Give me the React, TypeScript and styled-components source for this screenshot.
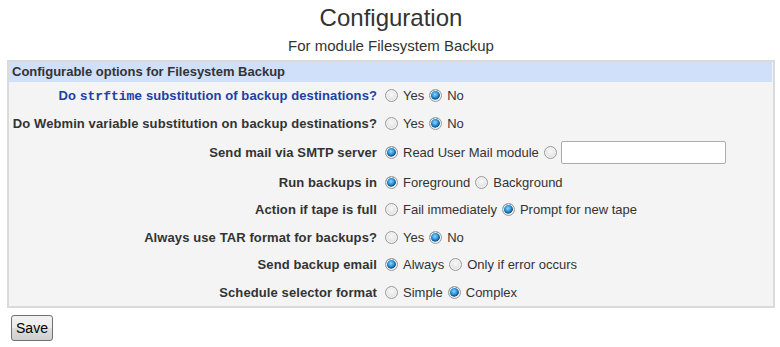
import React from 'react';
import styled, { createGlobalStyle } from 'styled-components';

const GlobalStyle = createGlobalStyle`
  body {
    margin: 0;
    background: #ffffff;
    font-family: "Liberation Sans", Arial, sans-serif;
    color: #333333;
  }
`;

const Page = styled.div`
  padding: 4px 5px 0 7px;
`;

const Title = styled.h1`
  margin: 0;
  text-align: center;
  font-size: 24px;
  line-height: 28px;
  font-weight: normal;
  color: #333;
`;

const Subtitle = styled.div`
  margin-top: 4.5px;
  text-align: center;
  font-size: 15px;
  line-height: 18px;
  color: #333;
`;

const Panel = styled.div`
  margin-top: 5.5px;
  border: 2px solid #dadada;
  padding: 0 1px 0 0;
  background: #f4f4f4;
`;

const PanelHead = styled.div`
  background: #d0dffa;
  height: 20px;
  line-height: 20px;
  padding-left: 3px;
  font-size: 13px;
  font-weight: bold;
  color: #333;
`;

const Grid = styled.div`
  display: grid;
  grid-template-columns: 368px 1fr;
  column-gap: 8px;
`;

const Label = styled.div<{ $link?: boolean }>`
  display: flex;
  align-items: center;
  justify-content: flex-end;
  padding: 4px 0 4.5px;
  min-height: 19px;
  font-size: 13px;
  font-weight: bold;
  letter-spacing: 0.1px;
  white-space: nowrap;
  color: ${p => (p.$link ? '#1c3fa8' : '#333')};

  tt {
    font-family: "Liberation Mono", "Courier New", monospace;
    font-size: 13px;
    letter-spacing: 0;
  }
`;

const Value = styled.div`
  display: flex;
  align-items: center;
  padding: 4px 0 4.5px;
  min-height: 19px;
  font-size: 13px;
  color: #333;
`;

const Radio = styled.input.attrs({ type: 'radio' })`
  appearance: none;
  -webkit-appearance: none;
  margin: 0 5px 0 0;
  width: 13px;
  height: 13px;
  flex: none;
  border-radius: 50%;
  border: 1px solid #9a9a9a;
  background: radial-gradient(circle at 50% 40%, #f8f8f8 0%, #e6e6e6 55%, #d2d2d2 100%);
  box-shadow: inset 0 0 0 1px #f4f4f4;

  &:checked {
    background:
      radial-gradient(circle at 45% 40%, #8fd6ff 0%, #2a8fd6 35%, #0b4f87 55%, transparent 62%),
      radial-gradient(circle at 50% 40%, #f8f8f8 0%, #e6e6e6 55%, #d2d2d2 100%);
  }
`;

const OptText = styled.span`
  margin-right: 5px;
  white-space: nowrap;
`;

const TextBox = styled.input.attrs({ type: 'text' })`
  width: 165px;
  height: 23px;
  box-sizing: border-box;
  margin: 0 0 0 -1px;
  border: 1px solid #acacac;
  border-radius: 2px;
  background: #fff;
  font: 13px "Liberation Sans", Arial, sans-serif;
`;

const SaveButton = styled.button`
  margin: 7px 0 0 4px;
  width: 42px;
  height: 26px;
  padding: 0;
  border: 1px solid #707070;
  border-radius: 3px;
  background: linear-gradient(#f2f2f2 0%, #ebebeb 50%, #dddddd 51%, #cfcfcf 100%);
  font: 14px "Liberation Sans", Arial, sans-serif;
  color: #000;
`;

type Opt = { text: string; checked?: boolean };

const Choice = ({ name, opts }: { name: string; opts: Opt[] }) => (
  <>
    {opts.map(o => (
      <React.Fragment key={o.text}>
        <Radio name={name} defaultChecked={o.checked} />
        {o.text && <OptText>{o.text}</OptText>}
      </React.Fragment>
    ))}
  </>
);

const rows: { label: React.ReactNode; name: string; opts: Opt[]; link?: boolean }[] = [
  {
    label: <>Do <tt>strftime</tt> substitution of backup destinations?</>,
    name: 'strftime',
    link: true,
    opts: [{ text: 'Yes' }, { text: 'No', checked: true }],
  },
  {
    label: 'Do Webmin variable substitution on backup destinations?',
    name: 'webmin',
    opts: [{ text: 'Yes' }, { text: 'No', checked: true }],
  },
];

const rowsAfter: { label: string; name: string; opts: Opt[] }[] = [
  { label: 'Run backups in', name: 'bg', opts: [{ text: 'Foreground', checked: true }, { text: 'Background' }] },
  { label: 'Action if tape is full', name: 'tape', opts: [{ text: 'Fail immediately' }, { text: 'Prompt for new tape', checked: true }] },
  { label: 'Always use TAR format for backups?', name: 'tar', opts: [{ text: 'Yes' }, { text: 'No', checked: true }] },
  { label: 'Send backup email', name: 'email', opts: [{ text: 'Always', checked: true }, { text: 'Only if error occurs' }] },
  { label: 'Schedule selector format', name: 'sched', opts: [{ text: 'Simple' }, { text: 'Complex', checked: true }] },
];

export default function App() {
  return (
    <Page>
      <GlobalStyle />
      <Title>Configuration</Title>
      <Subtitle>For module Filesystem Backup</Subtitle>
      <Panel>
        <PanelHead>Configurable options for Filesystem Backup</PanelHead>
        <Grid>
          {rows.map(r => (
            <React.Fragment key={r.name}>
              <Label $link={r.link}><span>{r.label}</span></Label>
              <Value><Choice name={r.name} opts={r.opts} /></Value>
            </React.Fragment>
          ))}
          <Label><span>Send mail via SMTP server</span></Label>
          <Value>
            <Choice name="smtp" opts={[{ text: 'Read User Mail module', checked: true }, { text: '' }]} />
            <TextBox />
          </Value>
          {rowsAfter.map(r => (
            <React.Fragment key={r.name}>
              <Label><span>{r.label}</span></Label>
              <Value><Choice name={r.name} opts={r.opts} /></Value>
            </React.Fragment>
          ))}
        </Grid>
      </Panel>
      <SaveButton>Save</SaveButton>
    </Page>
  );
}
